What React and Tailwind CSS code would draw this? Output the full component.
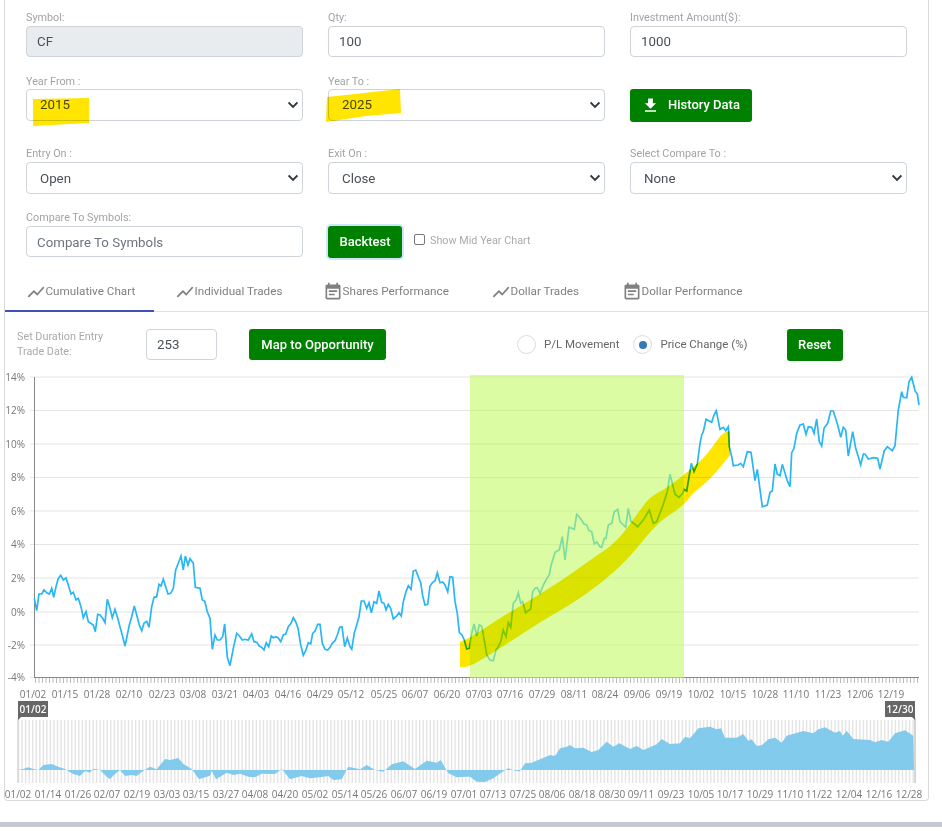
import { MdEventNote, MdFileDownload, MdShowChart } from "react-icons/md";

// line traced off the chart in 3x px, one list per crop
const partA = [[103,85],[110,122],[117,72],[125,72],[132,60],[140,68],[148,72],[155,55],[161,82],[168,50],[175,25],[182,16],[190,30],[198,24],[205,45],[213,72],[220,67],[228,90],[235,85],[243,110],[250,143],[258,125],[265,155],[272,160],[280,165],[286,185],[293,133],[300,135],[308,145],[315,158],[322,88],[330,115],[337,143],[345,118],[352,140],[360,170],[368,200],[375,228],[382,195],[388,165],[395,140],[403,108],[410,135],[418,165],[425,182],[432,160],[440,154],[447,172],[455,110],[462,82],[470,80],[477,43],[483,48],[490,28],[497,50],[504,72],[512,70],[520,55],[527,0],[535,-20],[543,-42],[550,0],[556,-42],[564,-15],[570,-34],[580,-20],[586,52],[600,55],[607,90],[614,93],[622,125],[630,145],[637,238],[645,195],[652,210],[660,210],[668,200],[674,162],[682,262],[690,287],[700,235],[710,190],[718,197],[727,210],[735,208],[745,210],[755,192],[762,215],[770,217],[778,228],[785,232],[792,240],[799,218],[806,230],[814,198],[820,203],[828,200],[835,204],[842,215],[850,195],[857,192],[865,170],[873,160],[880,143],[887,155],[894,175],[902,225],[910,256],[918,240],[925,218],[932,222],[938,190],[945,183],[953,163],[960,163],[967,220],[975,238],[983,240],[990,232],[997,220],[1005,212],[1012,195],[1019,172],[1026,170],[1034,230],[1042,204],[1050,230],[1055,238],[1063,190],[1070,165],[1077,140],[1084,93],[1092,93],[1100,115],[1107,98],[1114,128],[1122,95],[1130,100],[1137,63],[1145,97],[1152,100],[1158,120],[1165,103],[1172,115],[1180,147],[1190,138],[1197,128],[1204,138],[1210,95],[1218,65],[1225,47],[1233,58],[1240,3],[1247,0],[1255,20],[1262,38],[1268,78],[1275,105],[1283,103],[1290,48],[1298,37],[1305,33],[1312,8],[1320,38],[1328,36],[1335,45],[1343,65],[1350,20],[1358,22],[1365,95],[1372,130],[1378,187],[1386,195],[1393,210],[1400,237],[1408,235],[1415,190],[1422,162],[1430,198],[1438,165]];
const partB = [[65,168],[72,205],[80,255],[90,270],[100,272],[108,240],[115,230],[122,215],[130,180],[138,200],[145,158],[152,172],[160,100],[168,90],[175,68],[182,100],[188,95],[197,128],[205,122],[212,117],[218,65],[225,55],[232,53],[240,70],[250,45],[258,30],[268,15]];
const partC = [[272,740],[285,697],[298,690],[307,650],[315,720],[327,622],[343,628],[350,583],[358,590],[372,612],[380,615],[387,632],[395,635],[403,672],[410,665],[420,680],[425,682],[433,655],[438,655],[445,615],[455,610],[463,575],[473,568],[480,605],[497,622],[505,565],[512,603],[533,620],[552,597],[568,570],[580,610],[590,605],[610,553],[622,515],[630,463],[645,523],[657,532],[668,520],[672,508],[680,513],[694,430],[702,455],[712,432],[720,370],[725,345],[730,335],[738,298],[755,307],[762,285],[769,272],[780,328],[790,322],[797,332],[805,320],[808,380],[815,410],[820,437],[835,435],[842,430],[850,440],[862,395],[873,397],[885,482],[892,448],[907,560],[922,555],[930,517],[937,513],[945,432],[952,463],[960,467],[967,433],[982,482],[990,500],[995,398],[1002,385],[1010,340],[1020,315],[1030,312],[1038,343],[1045,320],[1055,322],[1062,340],[1070,297],[1078,365],[1085,378],[1092,325],[1103,310],[1112,273],[1120,273],[1133,315],[1142,352],[1150,322],[1157,330],[1165,408],[1178,335],[1187,385],[1195,410],[1202,435],[1210,402],[1215,402],[1225,417],[1240,413],[1253,415],[1260,447],[1273,392],[1282,380],[1297,392],[1305,377],[1315,270],[1325,215],[1330,232],[1340,233],[1347,185],[1355,172],[1365,212],[1372,222],[1377,255]];

const navA = [[52,600],[70,597],[85,592],[100,597],[115,600],[130,585],[155,582],[175,590],[195,597],[205,604],[220,612],[240,618],[255,603],[270,608],[280,596],[300,600],[320,620],[330,627],[345,612],[360,600],[375,618],[395,615],[410,618],[425,606],[450,590],[470,598],[495,567],[510,570],[535,564],[550,582],[575,597],[597,628],[630,617],[635,602],[648,628],[680,608],[700,615],[720,611],[745,620],[765,622],[785,611],[825,612],[845,597],[870,628],[905,618],[930,625],[960,622],[985,618],[1000,630],[1025,628],[1045,590],[1080,598],[1100,585],[1125,600],[1150,605],[1175,583],[1210,574],[1245,597],[1280,572],[1310,578],[1322,570],[1345,610],[1370,622]];
const navB = [[20,620],[30,620],[50,635],[75,636],[100,625],[130,604],[145,595],[165,602],[180,604],[195,580],[215,578],[240,568],[270,555],[285,558],[300,535],[320,530],[330,525],[345,535],[370,533],[395,546],[415,540],[440,515],[460,530],[478,520],[510,537],[530,528],[550,540],[590,523],[605,507],[630,522],[660,520],[675,500],[690,505],[715,475],[750,470],[770,478],[783,475],[795,503],[830,503],[850,492],[865,512],[875,508],[890,528],[905,526],[925,508],[945,503],[965,518],[980,497],[1030,483],[1060,490],[1075,478],[1095,472],[1125,488],[1140,483],[1148,497],[1160,482],[1180,507],[1230,510],[1245,517],[1265,510],[1285,515],[1305,490],[1335,481],[1360,497],[1362,600]];

const points = [
  ...partA.map(([x, y]) => [x / 3, 570 + y / 3]),
  ...partB.map(([x, y]) => [460 + x / 3, 570 + y / 3]),
  ...partC.map(([x, y]) => [460 + x / 3, 320 + y / 3]),
];
const navPoints = [
  ...navA.map(([x, y]) => [x / 3, 570 + y / 3]),
  ...navB.map(([x, y]) => [460 + x / 3, 570 + y / 3]),
];

const toPath = (list) => list.map(([x, y]) => `${x.toFixed(1)},${y.toFixed(1)}`).join(" ");

const curve = (list) => {
  let d = `L${list[0][0]} ${list[0][1]}`;
  for (let i = 1; i < list.length - 1; i++) {
    const [x, y] = list[i];
    const [nx, ny] = list[i + 1];
    d += ` Q${x} ${y} ${(x + nx) / 2} ${(y + ny) / 2}`;
  }
  return `${d} L${list[list.length - 1][0]} ${list[list.length - 1][1]}`;
};

const bandTop = [[460,642],[470,638],[500,618],[527,602],[564,579],[593,558],[617,542],[640,510],[650,497],[667,488],[690,470],[707,455],[722,433],[730,431]];
const bandBottom = [[730,455],[713,477],[693,493],[682,507],[657,523],[630,557],[603,582],[570,605],[540,622],[510,642],[470,667],[460,667]];
const highlightBand = `M460 642 ${curve(bandTop)} ${curve(bandBottom)} Z`;

const yTicks = [
  ["14%", 377], ["12%", 410.5], ["10%", 444], ["8%", 477.5], ["6%", 511], ["4%", 544.5],
  ["2%", 578], ["0%", 612], ["-2%", 645], ["-4%", 677.5],
];
const xTicks = [
  ["01/02", 33], ["01/15", 65], ["01/28", 97], ["02/10", 129], ["02/23", 162], ["03/08", 193], ["03/21", 225],
  ["04/03", 256], ["04/16", 288], ["04/29", 320], ["05/12", 351], ["05/25", 384], ["06/07", 415], ["06/20", 447],
  ["07/03", 479], ["07/16", 510], ["07/29", 542], ["08/11", 574], ["08/24", 605], ["09/06", 637], ["09/19", 669],
  ["10/02", 701], ["10/15", 733], ["10/28", 765], ["11/10", 796], ["11/23", 828], ["12/06", 860], ["12/19", 891],
];
const navTicks = [
  ["01/02", 18], ["01/14", 48], ["01/26", 78], ["02/07", 107], ["02/19", 137], ["03/03", 167], ["03/15", 196],
  ["03/27", 226], ["04/08", 255], ["04/20", 285], ["05/02", 315], ["05/14", 345], ["05/26", 374], ["06/07", 404],
  ["06/19", 434], ["07/01", 464], ["07/13", 493], ["07/25", 523], ["08/06", 552], ["08/18", 582], ["08/30", 612],
  ["09/11", 641], ["09/23", 671], ["10/05", 701], ["10/17", 730], ["10/29", 760], ["11/10", 790], ["11/22", 819],
  ["12/04", 849], ["12/16", 879], ["12/28", 909],
];
const dayTicks = Array.from({ length: 253 }, (_, i) => i);

const tabs = [
  { label: "Cumulative Chart", icon: "line", width: "w-[149px]", active: true },
  { label: "Individual Trades", icon: "line", width: "w-[148px]" },
  { label: "Shares Performance", icon: "cal", width: "w-[168px]" },
  { label: "Dollar Trades", icon: "line", width: "w-[131px]" },
  { label: "Dollar Performance", icon: "cal", width: "w-[160px]" },
];

const labelCls = "block h-4 text-[10.8px] leading-[15px] text-[#a3a3a3]";
const inputCls = "block w-full h-[31px] rounded border border-[#ced4da] px-[10px] text-[13.3px] text-[#495057] outline-none";

const Field = ({ label, value, disabled, placeholder }) => (
  <div>
    <label className={labelCls}>{label}</label>
    {placeholder ? (
      <input className={`${inputCls} bg-white pt-[2px] placeholder:text-[#6c757d]`} placeholder={placeholder} />
    ) : (
      <input
        className={`${inputCls} ${disabled ? "bg-[#e9ecef]" : "bg-white"}`}
        defaultValue={value}
        disabled={disabled}
      />
    )}
  </div>
);

const SelectField = ({ label, value, labelClass = "", selectClass = "", children }) => (
  <div>
    <label className={`${labelCls} ${labelClass}`}>{label}</label>
    <div className="relative">
      <select
        defaultValue={value}
        className={`block w-full h-[32px] appearance-none rounded border border-[#ced4da] bg-white pl-[13px] text-[13.3px] text-[#495057] outline-none ${selectClass}`}
      >
        <option>{value}</option>
      </select>
      <svg className="absolute right-[5px] top-[12px] w-[10px] h-[8px]" viewBox="0 0 10 8" fill="none">
        <path d="M0.6 1.4 5 5.8 9.4 1.4" stroke="#343a40" strokeWidth="1.9" />
      </svg>
      {children}
    </div>
  </div>
);

const GreenButton = ({ className, children }) => (
  <button className={`rounded-[3px] bg-[#008000] text-[13px] font-medium text-white ${className}`}>{children}</button>
);

const Radio = ({ label, checked }) => (
  <label className="flex items-center gap-2 text-[11.5px] text-[#666]">
    <span className="flex h-[19px] w-[19px] items-center justify-center rounded-full border border-[#dcdcdc]">
      {checked && <span className="h-2 w-2 rounded-full bg-[#337ab7]" />}
    </span>
    {label}
  </label>
);

const Chart = () => (
  <svg className="block" width="923" height="434" viewBox="5 366 923 434" style={{ fontFamily: "'Open Sans', sans-serif" }}>
    {yTicks.map(([label, y]) => (
      <g key={label}>
        <line x1="30" x2="919" y1={y} y2={y} stroke="#e4e4e4" />
        <text x="25" y={y + 3.5} textAnchor="end" fontSize="10" fill="#777">{label}</text>
      </g>
    ))}
    {dayTicks.map((i) => (
      <line key={i} x1={35.5 + i * 3.5} x2={35.5 + i * 3.5} y1="678" y2="683" stroke="#bbb" />
    ))}
    <line x1="34.5" x2="34.5" y1="377" y2="678" stroke="#888" />
    <line x1="34.5" x2="919" y1="677.5" y2="677.5" stroke="#888" />
    {xTicks.map(([label, x]) => (
      <text key={label} x={x} y="698" textAnchor="middle" fontSize="10" fill="#777">{label}</text>
    ))}

    <polyline points={toPath(points)} fill="none" stroke="#29b6f6" strokeWidth="1.7" />
    <rect x="470" y="375" width="214" height="303" fill="#bffa5b" fillOpacity="0.56" />
    <path d={highlightBand} fill="#ffe500" className="mix-blend-multiply" />

    {dayTicks.map((i) => (
      <line key={i} x1={18.5 + i * 3.55} x2={18.5 + i * 3.55} y1="720" y2="783" stroke="#e4e4e4" strokeWidth="1.4" />
    ))}
    <polyline points={toPath([[17.5, 770], ...navPoints, [914, 770]])} fill="#7cc8ec" fillOpacity="0.95" />
    <line x1="18" x2="18" y1="718" y2="783" stroke="#ccc" />
    <line x1="915" x2="915" y1="718" y2="783" stroke="#aaa" />

    <path d="M18 701h30v16H21l-3 3z" fill="#666" />
    <text x="33" y="713" textAnchor="middle" fontSize="10" fontWeight="600" fill="#fff">01/02</text>
    <path d="M885 701h30v19l-3-3h-27z" fill="#666" />
    <text x="900" y="713" textAnchor="middle" fontSize="10" fontWeight="600" fill="#fff">12/30</text>

    {navTicks.map(([label, x]) => (
      <text key={label} x={x} y="798" textAnchor="middle" fontSize="10" fill="#777">{label}</text>
    ))}
  </svg>
);

const App = () => {
  return (
    <div className="min-h-[833px] bg-white font-['Roboto',sans-serif]">
      <div className="ml-[4px] w-[925px] rounded-b border-x border-b border-[#d9d9d9]">
        <div className="px-[21px] pt-[10px]">
          <div className="grid grid-cols-3 gap-x-[25px]">
            <Field label="Symbol:" value="CF" disabled />
            <Field label="Qty:" value="100" />
            <Field label="Investment Amount($):" value="1000" />
          </div>

          <div className="mt-4 grid h-12 grid-cols-3 gap-x-[25px]">
            <SelectField label="Year From :" value="2015" labelClass="pt-px">
              <svg className="absolute left-[6px] top-[9px] mix-blend-multiply" width="58" height="29" viewBox="0 0 58 29">
                <polygon points="1,1 57,0 57,25 1,28" fill="#ffe500" />
              </svg>
            </SelectField>
            <SelectField label="Year To :" value="2025" labelClass="pt-px">
              <svg className="absolute -left-[2px] -top-[1px] mix-blend-multiply" width="76" height="35" viewBox="0 0 76 35">
                <polygon points="1,9 20,7 74,1 75,25 40,28 0,34" fill="#ffe500" />
              </svg>
            </SelectField>
            <div className="pt-4">
              <GreenButton className="flex h-[33px] w-[122px] items-center gap-[8px] pb-px pl-[11px]">
                <MdFileDownload className="text-[19px]" />
                History Data
              </GreenButton>
            </div>
          </div>

          <div className="mt-[25px] grid grid-cols-3 gap-x-[25px]">
            <SelectField label="Entry On :" value="Open" selectClass="pt-[2px]" />
            <SelectField label="Exit On :" value="Close" selectClass="pt-[2px]" />
            <SelectField label="Select Compare To :" value="None" selectClass="pt-[2px]" />
          </div>

          <div className="mt-4 grid grid-cols-3 gap-x-[25px]">
            <Field label="Compare To Symbols:" placeholder="Compare To Symbols" />
            <div className="flex items-start pt-4">
              <GreenButton className="h-[32px] w-[74px] shadow-[0_0_0_2px_#cfe6f8]">Backtest</GreenButton>
              <label className="ml-3 flex items-center gap-[5px] pt-[8px] text-[10.8px] leading-[13px] text-[#aaa]">
                <span className="mb-[2px] h-[11px] w-[11px] rounded-[2px] border border-[#777]" />
                Show Mid Year Chart
              </label>
            </div>
          </div>
        </div>

        <div className="mt-[17px] flex h-[37px] border-b border-[#e0e0e0]">
          {tabs.map((tab) => (
            <div
              key={tab.label}
              className={`flex items-center pl-[20.5px] pb-[2px] text-[11.7px] text-[#808080] ${tab.width} ${tab.active ? "border-b-2 border-[#3f51b5] -mb-px" : ""}`}
            >
              {tab.icon === "line" ? <MdShowChart className="text-[20px]" /> : <MdEventNote className="text-[20px]" />}
              {tab.label}
            </div>
          ))}
        </div>

        <div className="mt-[17px] flex items-start pl-[12px]">
          <div className="w-[129px] text-[10.8px] leading-[15px] text-[#aaa]">
            Set Duration Entry
            <br />
            Trade Date:
          </div>
          <input className="h-[31px] w-[71px] rounded border border-[#ced4da] px-[10px] text-[13.3px] text-[#495057] outline-none" defaultValue="253" />
          <GreenButton className="ml-[32px] h-[31px] w-[137px]">Map to Opportunity</GreenButton>
          <div className="ml-[131px] flex h-[31px] gap-[14px]">
            <Radio label="P/L Movement" />
            <Radio label="Price Change (%)" checked />
          </div>
          <GreenButton className="ml-[39px] h-[32px] w-[56px]">Reset</GreenButton>
        </div>

        <div className="mt-[5px]">
          <Chart />
        </div>
      </div>

      <div className="mt-[21px] h-[5px] bg-[#c4c9d2]" />
    </div>
  );
};

export default App;
